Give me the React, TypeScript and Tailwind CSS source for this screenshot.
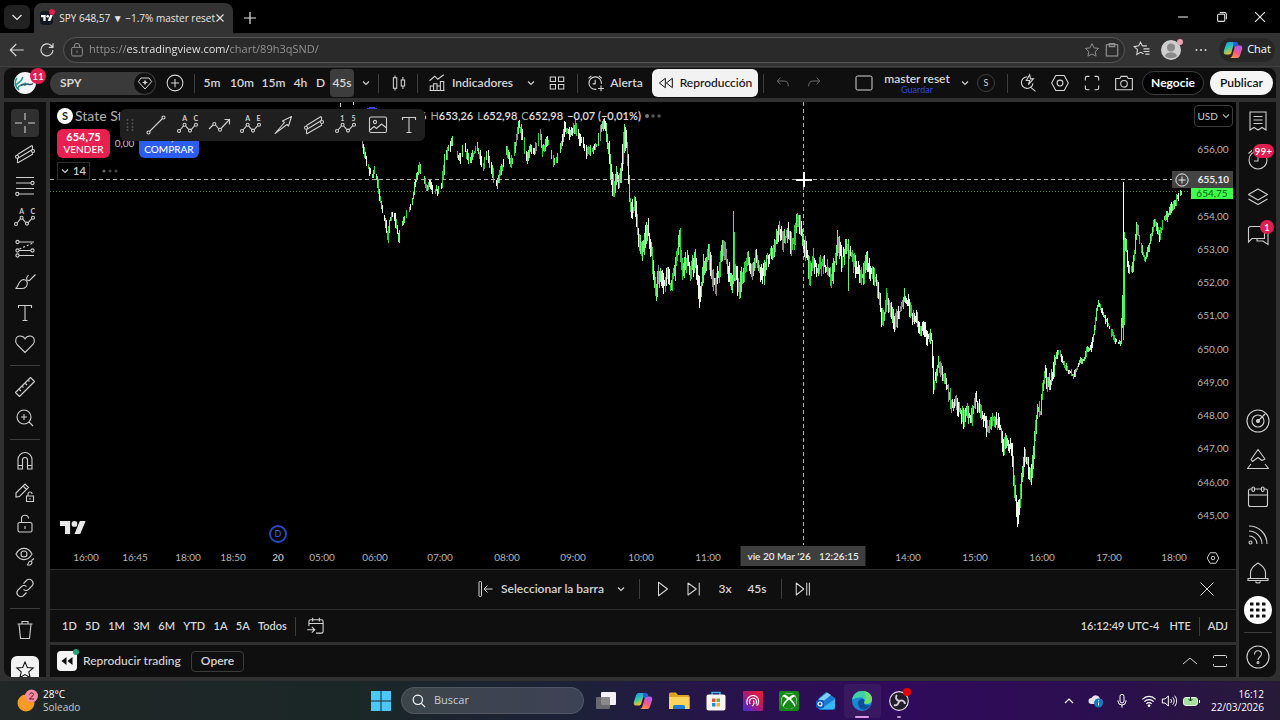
import type { ReactNode } from 'react';

interface GlyphProps {
  children: ReactNode;
  className?: string;
}

// 24px grid line icon, one-pixel strokes
const Glyph = ({ children, className = 'h-6 w-6' }: GlyphProps) => (
  <svg
    viewBox="0 0 24 24"
    fill="none"
    stroke="currentColor"
    strokeWidth="1.1"
    className={`shrink-0 ${className}`}
    aria-hidden="true"
  >
    {children}
  </svg>
);

const Chevron = () => (
  <svg viewBox="0 0 8 8" className="h-2 w-2 shrink-0" fill="none" stroke="currentColor" strokeWidth="1.1" aria-hidden="true">
    <path d="M1 2.5l3 3 3-3" />
  </svg>
);

const Sep = ({ className = '' }: { className?: string }) => (
  <div className={`w-px shrink-0 bg-[#3c3c3c] ${className}`} />
);

const patternGlyph = (first: string, last: string) => (
  <Glyph>
    <path d="M4 17l3.5-4.2M9.6 12.8l3.2 3.8M15.2 16.6l3.6-4" />
    <circle cx="3" cy="18" r="1.5" />
    <circle cx="8.6" cy="11.8" r="1.5" />
    <circle cx="14" cy="17.6" r="1.5" />
    <circle cx="20" cy="11.8" r="1.5" />
    <text x="6.2" y="7.6" fontSize="7" fontWeight="700" fill="currentColor" stroke="none">{first}</text>
    <text x="17.6" y="7.6" fontSize="7" fontWeight="700" fill="currentColor" stroke="none">{last}</text>
  </Glyph>
);

const channelGlyph = (
  <Glyph>
    <path d="M4.5 12.5L19 3.5M4.5 16.5L19.5 7.5M4.5 21L20 12M4.5 12.5v8.5M19.5 3.5v8" />
    <circle cx="4" cy="14.8" r="1.5" fill="#0f0f0f" />
    <circle cx="20" cy="9" r="1.5" fill="#0f0f0f" />
  </Glyph>
);

const textGlyph = (
  <Glyph>
    <path d="M5.5 7V4.5h13V7M12 4.5v15M9.5 19.5h5" />
  </Glyph>
);

const drawingTools = [
  {
    label: 'Cruz',
    icon: <Glyph><path d="M12 2v7M12 15v7M2 12h7M15 12h7" /></Glyph>,
  },
  { label: 'Líneas de tendencia', icon: channelGlyph },
  {
    label: 'Fibonacci',
    icon: (
      <Glyph>
        <path d="M3 3.5h18M3 9h15M3 14.5h18M6 20h15" />
        <circle cx="19.5" cy="9" r="1.6" />
        <circle cx="4.3" cy="20" r="1.6" />
      </Glyph>
    ),
  },
  { label: 'Patrones', icon: patternGlyph('A', 'C') },
  {
    label: 'Proyección',
    icon: (
      <Glyph>
        <path d="M6 5h15M6 13.5h12M6 18.5h15" />
        <path d="M6.5 12L20 6" strokeDasharray="2 2" />
        <circle cx="4.5" cy="5" r="1.6" />
        <circle cx="4.5" cy="13.5" r="1.6" />
        <circle cx="4.5" cy="18.5" r="1.6" />
        <circle cx="19.5" cy="13.5" r="1.6" />
      </Glyph>
    ),
  },
  {
    label: 'Pincel',
    icon: (
      <Glyph>
        <path d="M2.5 19.5c3-1 2.5-8 8-9 2.5 0 4 2 3.8 4.5-.5 3-3 4.5-5.5 4.5zM14 8c-1 2 0 4 2.5 3.5L22.5 5.5M14 8l1.5-2" />
      </Glyph>
    ),
  },
  { label: 'Texto', icon: textGlyph },
  {
    label: 'Iconos',
    icon: <Glyph><path d="M12 20.5l-8-8C1.5 9.5 2.5 4 7 4c2.5 0 4 1 5 2.8C13 5 14.5 4 17 4c4.5 0 5.5 5.5 3 8.5z" /></Glyph>,
  },
];

const measureTools = [
  {
    label: 'Medir',
    icon: <Glyph><path d="M2.5 17.5l15-15 4 4-15 15zM6 14l2 2M9 11l1.5 1.5M12 8l2 2M15 5l1.5 1.5" strokeLinejoin="round" /></Glyph>,
  },
  {
    label: 'Ampliar',
    icon: <Glyph><circle cx="11" cy="11" r="7" /><path d="M16 16l4 4M8 11h6M11 8v6" /></Glyph>,
  },
];

const lockTools = [
  {
    label: 'Imán',
    icon: <Glyph><path d="M5 20V10.5a7 7 0 0 1 14 0V20h-4.5v-9a2.5 2.5 0 0 0-5 0v9zM5 16.5h4.5M14.5 16.5H19" /></Glyph>,
  },
  {
    label: 'Mantener dibujo',
    icon: <Glyph><path d="M3 12L12 3l3.5 3.5-9 9L3 16zM10 5l3.5 3.5M13.5 15h7v5.5h-7zM15 15v-2a2 2 0 0 1 4 0M17 17v1.5" /></Glyph>,
  },
  {
    label: 'Bloquear dibujos',
    icon: <Glyph><rect x="5" y="10.5" width="14" height="9.5" rx="1.5" /><path d="M8.5 10.5V7a3.5 3.5 0 0 1 7-.5M12 14v3" /></Glyph>,
  },
  {
    label: 'Ocultar dibujos',
    icon: <Glyph><path d="M3 10c4-7.5 12-7.5 16 0-4 7.5-12 7.5-16 0zM14 21c1.5-.5 1-3.5 3.5-4 2 0 2 3.5-.5 4zM18.5 16.5l2.5-2" /><circle cx="11" cy="10" r="3" /></Glyph>,
  },
  {
    label: 'Enlace',
    icon: <Glyph><path d="M10.5 7.5L14 4a4 4 0 0 1 5.5 5.5l-4 4a4 4 0 0 1-5 0M13.5 16.5L10 20a4 4 0 0 1-5.5-5.5l4-4a4 4 0 0 1 5 0" /></Glyph>,
  },
];

const trashTools = [
  {
    label: 'Eliminar',
    icon: <Glyph><path d="M4.5 6h15M6 6l1.5 14.5h9L18 6M9 6V3.5h6V6" /></Glyph>,
  },
];

const toolGroups = [drawingTools, measureTools, lockTools, trashTools];

const favoriteTools = [
  {
    label: 'Línea',
    icon: <Glyph><path d="M5.5 18.5l13-13" /><circle cx="4.5" cy="19.5" r="1.5" /><circle cx="19.5" cy="4.5" r="1.5" /></Glyph>,
  },
  { label: 'ABC', icon: patternGlyph('A', 'C') },
  {
    label: 'Ruta',
    icon: (
      <Glyph>
        <path d="M2 16l4-4M8.5 12l3.5 4M14 15.5L22 7M17.5 6.5h5v5" />
        <circle cx="7.3" cy="11" r="1.5" />
        <circle cx="13" cy="16.8" r="1.5" />
      </Glyph>
    ),
  },
  { label: 'ABCDE', icon: patternGlyph('A', 'E') },
  {
    label: 'Flecha',
    icon: <Glyph><path d="M4 20.5l9.5-11-2-1.5L20.5 3.5 17.5 13l-1.5-1.5z" strokeLinejoin="round" /></Glyph>,
  },
  { label: 'Canal', icon: channelGlyph },
  { label: 'Impulso', icon: patternGlyph('1', '5') },
  {
    label: 'Imagen',
    icon: <Glyph><rect x="3.5" y="4" width="17" height="15.5" rx="1.5" /><circle cx="9" cy="9" r="1.6" /><path d="M4 17l4-3.5 2.5 2 5-4.5 5 4" /></Glyph>,
  },
  { label: 'Texto', icon: textGlyph },
];

const intervals = [
  { label: '5m', className: 'w-[30px]' },
  { label: '10m', className: 'w-[30px]' },
  { label: '15m', className: 'w-[33px]' },
  { label: '4h', className: 'w-[21px]' },
  { label: 'D', className: 'w-[19px]' },
  { label: '45s', className: 'w-6 h-7 rounded bg-[#3d3d3d]' },
];

const sideTop = [
  {
    label: 'Lista',
    badge: '',
    icon: <Glyph><path d="M4 3h16v18l-4-2.5-4 2.5-4-2.5L4 21zM7.5 7.5h9M7.5 11h9M7.5 14.5h9" /></Glyph>,
  },
  {
    label: 'Alertas',
    badge: '99+',
    icon: <Glyph><circle cx="12" cy="13" r="9" /><path d="M12 8v6H8M2.5 6.500L6 3.500" /></Glyph>,
  },
  {
    label: 'Capas',
    badge: '',
    icon: <Glyph><path d="M12 4l9.5 5.5L12 15 2.5 9.5zM2.5 14l9.5 5.5 9.5-5.5" strokeLinejoin="round" /></Glyph>,
  },
  {
    label: 'Chat',
    badge: '1',
    icon: <Glyph><path d="M2.5 19V5.5a2 2 0 0 1 2-2h14v12H6zM11 16v2h6l5 3.5V8h-3.5" /></Glyph>,
  },
];

const sideBottom = [
  {
    label: 'Analizador',
    icon: <Glyph><circle cx="12" cy="12" r="11" /><circle cx="12" cy="12" r="6" /><circle cx="12" cy="12" r="1.5" fill="currentColor" /><path d="M12 12l7.5-7.5" /></Glyph>,
  },
  {
    label: 'Pine',
    icon: <Glyph><path d="M12 2.5l7 9.5-3 1.500-4-3-5.500 4L5 12.500zM5 17l-3.500 4.500h21L19 17" strokeLinejoin="round" /></Glyph>,
  },
  {
    label: 'Calendario',
    icon: <Glyph><rect x="2.5" y="4" width="19" height="17.5" rx="2" /><path d="M2.5 10h19" /><rect x="6" y="2" width="2.5" height="4.5" rx="1.2" fill="#0f0f0f" /><rect x="15.5" y="2" width="2.5" height="4.5" rx="1.2" fill="#0f0f0f" /></Glyph>,
  },
  {
    label: 'Ideas',
    icon: <Glyph><path d="M3 3c10 0 18 8 18 18M3 8c7 0 13 6 13 13M3 13c4.5 0 8 3.5 8 8" /><circle cx="4.5" cy="19.5" r="1.5" /></Glyph>,
  },
  {
    label: 'Notificaciones',
    icon: <Glyph><path d="M4.5 17.5v-6C4.5 7 8 4.5 12 2c4 2.500 7.500 5 7.500 9.500v6M2 17.500h20v2H2zM9.500 20.500c.5 2 4.500 2 5 0" /></Glyph>,
  },
];

const priceLabels = [656, 655, 654, 653, 652, 651, 650, 649, 648, 647, 646, 645];

// x is measured on the 1186 wide chart canvas
const timeLabels = [
  { text: '16:00', x: 36 },
  { text: '16:45', x: 85 },
  { text: '18:00', x: 138 },
  { text: '18:50', x: 183 },
  { text: '20', x: 228 },
  { text: '05:00', x: 272 },
  { text: '06:00', x: 325 },
  { text: '07:00', x: 390 },
  { text: '08:00', x: 457 },
  { text: '09:00', x: 523 },
  { text: '10:00', x: 591 },
  { text: '11:00', x: 658 },
  { text: '14:00', x: 858 },
  { text: '15:00', x: 925 },
  { text: '16:00', x: 992 },
  { text: '17:00', x: 1059 },
  { text: '18:00', x: 1124 },
];

const ranges = ['1D', '5D', '1M', '3M', '6M', 'YTD', '1A', '5A', 'Todos'];

// swing points of the session: x, y
const swings = [
  361, 139, 366, 158, 368, 166, 372, 176, 375, 170, 378, 184, 380, 200, 383, 210, 386, 224, 388, 238, 390, 220, 394, 213, 399, 238,
  401, 228, 405, 220, 409, 210, 413, 198, 416, 180, 420, 166, 424, 178, 427, 188, 430, 183, 433, 192, 437, 190, 440, 193,
  442, 184, 445, 160, 448, 150, 452, 142, 455, 148, 459, 160, 462, 153, 465, 146, 468, 160, 472, 157, 477, 148, 480, 155,
  483, 168, 487, 153, 490, 165, 494, 177, 497, 185, 500, 175, 504, 162, 507, 148, 510, 163, 513, 160, 516, 142, 519, 124,
  523, 138, 527, 158, 530, 150, 535, 152, 540, 134, 543, 150, 548, 140, 551, 155, 555, 165, 560, 150, 565, 128, 570, 133,
  575, 126, 580, 140, 585, 147, 587, 154, 592, 150, 597, 144, 602, 128, 604, 122, 606, 130, 609, 150, 612, 182, 614, 188,
  617, 176, 619, 188, 622, 165, 625, 132, 628, 155, 630, 200, 633, 212, 635, 202, 638, 228, 642, 256, 645, 240, 648, 230,
  652, 255, 656, 290, 660, 272, 665, 286, 668, 275, 671, 288, 676, 265, 680, 240, 683, 272, 687, 258, 691, 270, 696, 258,
  700, 298, 704, 266, 709, 252, 713, 278, 717, 284, 720, 265, 724, 247, 728, 268, 732, 284, 736, 272, 739, 290, 744, 270,
  748, 259, 752, 273, 756, 260, 760, 270, 764, 273, 767, 258, 772, 252, 776, 241, 779, 229, 783, 243, 788, 232, 792, 248,
  797, 224, 800, 222, 803, 242, 807, 252, 810, 276, 814, 260, 818, 271, 823, 262, 828, 272, 832, 278, 835, 262, 838, 242,
  842, 260, 846, 247, 851, 252, 855, 265, 860, 275, 864, 274, 867, 262, 872, 274, 877, 284, 880, 298, 882, 320, 885, 312,
  887, 298, 891, 310, 895, 324, 900, 312, 904, 298, 908, 302, 912, 314, 917, 320, 920, 334, 924, 328, 928, 338, 932, 340,
  934, 386, 937, 370, 939, 362, 943, 375, 948, 388, 952, 406, 955, 402, 960, 410, 964, 420, 967, 412, 971, 420, 976, 399,
  980, 408, 985, 420, 988, 430, 992, 420, 997, 420, 1001, 430, 1003, 448, 1007, 440, 1012, 450, 1015, 490, 1018, 518,
  1021, 490, 1025, 456, 1028, 465, 1031, 480, 1034, 450, 1038, 408, 1041, 414, 1043, 385, 1046, 374, 1048, 386, 1052, 378,
  1056, 358, 1059, 350, 1063, 362, 1068, 370, 1074, 376, 1080, 362, 1085, 358, 1087, 349, 1091, 349, 1094, 335, 1097, 310,
  1099, 303, 1102, 312, 1107, 322, 1113, 335, 1117, 342, 1121, 344, 1123, 300, 1125, 240, 1127, 250, 1129, 272, 1133, 267,
  1135, 250, 1137, 226, 1140, 240, 1145, 260, 1149, 248, 1152, 235, 1155, 222, 1160, 236, 1164, 220, 1168, 216, 1172, 206,
  1176, 200, 1182, 193,
];

const spikes = [
  { x: 733, top: 211, bottom: 282, color: '#4bf25a' },
  { x: 734, top: 232, bottom: 278, color: '#3bd948' },
  { x: 848, top: 252, bottom: 291, color: '#6fe77b' },
  { x: 1123, top: 228, bottom: 340, color: '#3bff49' },
  { x: 1124, top: 232, bottom: 325, color: '#3bff49' },
  { x: 1123, top: 182, bottom: 240, color: '#ffffff' },
];

const spreadAt = (x: number) => {
  if (x < 442) return 5;
  if (x < 608) return 7;
  if (x < 870) return 12;
  if (x < 1055) return 10;
  if (x < 1122) return 4;
  return 6;
};

const buildBars = () => {
  const bars: { x: number; top: number; bottom: number; color: string }[] = [];
  let seed = 20;
  const next = () => {
    seed = (seed * 16807) % 2147483647;
    return seed / 2147483647;
  };
  for (let i = 0; i < swings.length - 2; i += 2) {
    const [x0, y0, x1, y1] = swings.slice(i, i + 4);
    for (let x = x0; x < x1; x += 1) {
      const from = y0 + ((y1 - y0) * (x - x0)) / (x1 - x0);
      const to = y0 + ((y1 - y0) * (x + 1 - x0)) / (x1 - x0);
      const spread = spreadAt(x);
      const top = Math.min(from, to) - next() * spread;
      const bottom = Math.max(from, to) + next() * spread;
      const tone = next();
      const down = y1 > y0;
      const green = tone < (down ? 0.4 : 0.75);
      const skip = spread < 8 && next() < (x < 608 ? 0.22 : 0.08);
      const color = green ? (tone < 0.25 ? '#2fd03c' : '#6df57a') : tone > 0.88 ? '#8a8a8a' : '#eafbea';
      if (!skip) bars.push({ x, top: Math.round(top), bottom: Math.round(bottom), color });
    }
  }
  return [...bars, ...spikes];
};

const bars = buildBars();

const TvLogo = ({ className }: { className: string }) => (
  <svg viewBox="0 4 36 18" className={className} fill="currentColor" aria-hidden="true">
    <path d="M14 22H7V11H0V4h14v18zM28 22h-8l7.5-18h8L28 22z" />
    <circle cx="20" cy="8" r="4" />
  </svg>
);

const Copilot = ({ id, className }: { id: string; className: string }) => (
  <svg viewBox="0 0 20 20" className={className} aria-hidden="true">
    <defs>
      <linearGradient id={`${id}-a`} x1="0" y1="0" x2="0.4" y2="1">
        <stop offset="0" stopColor="#1f8df0" />
        <stop offset="0.5" stopColor="#2bc6b4" />
        <stop offset="1" stopColor="#f5c518" />
      </linearGradient>
      <linearGradient id={`${id}-b`} x1="0.6" y1="0" x2="0.2" y2="1">
        <stop offset="0" stopColor="#b45cf0" />
        <stop offset="0.5" stopColor="#f0568f" />
        <stop offset="1" stopColor="#ff9a3d" />
      </linearGradient>
    </defs>
    <path d="M5.5 2H13c-1.800.5-2.300 2-2.800 4L8.500 12c-.6 2-1.500 2.500-3 2.500H3C.8 14.500.4 12.500 1 10.500l2-6C3.500 3 4.200 2 5.500 2z" fill={`url(#${id}-a)`} />
    <path d="M14.500 18H7c1.800-.5 2.300-2 2.800-4l1.700-6c.6-2 1.500-2.500 3-2.500H17c2.200 0 2.600 2 2 4l-2 6c-.5 1.500-1.200 2.500-2.500 2.500z" fill={`url(#${id}-b)`} />
    <path d="M10 2h3c1.500 0 2 1.500 2.500 3.500h-1c-2 0-2.600.8-3 2.300l-1-3z" fill="#2560d8" />
  </svg>
);

const BrowserChrome = () => (
  <header className="font-['Open_Sans',sans-serif]">
    <div className="flex h-[33px] items-end bg-black pl-1 text-[#e6e6e6]">
      <button aria-label="Pestañas" className="mb-1 flex h-6 w-[26px] items-center justify-center rounded-md bg-[#212121]">
        <svg viewBox="0 0 12 12" className="h-3 w-3" fill="none" stroke="currentColor" strokeWidth="1.2"><path d="M1.5 4L6 8.500 10.500 4" /></svg>
      </button>
      <div className="ml-1 flex h-[30px] w-[199px] items-center rounded-t-lg bg-[#333] pl-1.5 pr-2">
        <span className="relative flex h-3.5 w-3.5 items-center justify-center rounded-sm bg-[#131722] text-white">
          <TvLogo className="h-1.5 w-3" />
          <span className="absolute -right-0.5 -top-0.5 h-1.5 w-1.5 rounded-full bg-[#e01e4f]" />
        </span>
        <span className="ml-1.5 flex-1 whitespace-nowrap text-[10px] font-medium">SPY 648,57 ▼ −1.7% master reset</span>
        <button aria-label="Cerrar pestaña">
          <svg viewBox="0 0 10 10" className="h-2.5 w-2.5" fill="none" stroke="currentColor" strokeWidth="1.1"><path d="M1.5 1.5l7 7M8.5 1.5l-7 7" /></svg>
        </button>
      </div>
      <button aria-label="Nueva pestaña" className="mb-2 ml-2.5">
        <svg viewBox="0 0 14 14" className="h-3.5 w-3.5" fill="none" stroke="currentColor" strokeWidth="1.2"><path d="M7 1v12M1 7h12" /></svg>
      </button>
      <div className="mb-2.5 ml-auto flex w-[103px] items-center justify-between pr-3.5">
        <button aria-label="Minimizar"><svg viewBox="0 0 11 11" className="h-3 w-3" stroke="currentColor"><path d="M1 5.5h9" /></svg></button>
        <button aria-label="Restaurar"><svg viewBox="0 0 11 11" className="h-3 w-3" fill="none" stroke="currentColor"><rect x="1.5" y="3" width="6.5" height="6.5" rx="1" /><path d="M3.5 1.5H8A1.5 1.5 0 0 1 9.5 3v4.5" /></svg></button>
        <button aria-label="Cerrar"><svg viewBox="0 0 11 11" className="h-3 w-3" stroke="currentColor"><path d="M1 1l9 9M10 1l-9 9" /></svg></button>
      </div>
    </div>

    <div className="flex h-[33px] items-center bg-[#333] pl-2 text-[#d8d8d8]">
      <button aria-label="Atrás"><Glyph className="h-[18px] w-[18px]"><path d="M21 12H3M11 4l-8 8 8 8" strokeWidth="1.5" /></Glyph></button>
      <button aria-label="Recargar" className="ml-3"><Glyph className="h-[18px] w-[18px]"><path d="M20 12a8 8 0 1 1-2.5-6L20 8M20 3v5.5h-5.5" strokeWidth="1.5" /></Glyph></button>
      <div className="ml-[7px] flex h-[26px] flex-1 items-center rounded-full border border-[#555] bg-[#2a2a2a] pr-1 pl-[5px] text-[#8f8f8f]">
        <Glyph className="h-4 w-4"><rect x="4" y="8" width="16" height="13" rx="2" strokeWidth="1.5" /><path d="M8 8V6a4 4 0 0 1 8 0v2M12 13v3" strokeWidth="1.5" /></Glyph>
        <input
          aria-label="Dirección"
          defaultValue="https://es.tradingview.com/chart/89h3qSND/"
          className="ml-1 min-w-0 flex-1 bg-[linear-gradient(to_right,#969696_38px,#f0f0f0_38px,#f0f0f0_140px,#969696_140px)] bg-clip-text text-[11px] text-transparent outline-none"
        />
        <button aria-label="Favorito"><Glyph className="h-4 w-4"><path d="M12 2.500l3 6.300 6.800.9-5 4.700 1.300 6.900-6.100-3.400-6.100 3.400 1.300-6.900-5-4.700 6.800-.9z" strokeWidth="1.5" /></Glyph></button>
        <button aria-label="Portapapeles" className="ml-1"><Glyph className="h-4 w-4"><rect x="3.5" y="4" width="17" height="17" strokeWidth="1.800" /><path d="M8 2.500h8V7H8z" strokeWidth="1.800" /></Glyph></button>
      </div>
      <button aria-label="Favoritos" className="ml-2"><Glyph className="h-[18px] w-[18px]"><path d="M14 17l-4-2-5 3 1-6.500L1.500 7.500 7.500 6.500 10 1.500l2.500 5h6M14 10.500h8M14 14h8M16.500 17.500H22" strokeWidth="1.400" /></Glyph></button>
      <button aria-label="Perfil" className="relative ml-2.5">
        <svg viewBox="0 0 20 20" className="h-5 w-5"><circle cx="10" cy="10" r="10" fill="#cfcfcf" /><circle cx="10" cy="7.500" r="4" fill="#8a8a8a" /><path d="M4 16c1-5 11-5 12 0-3 3-9 3-12 0z" fill="#8a8a8a" /></svg>
        <span className="absolute -right-0.5 -top-px h-1.5 w-1.5 rounded-full bg-[#f0a3b4]" />
      </button>
      <button aria-label="Más" className="ml-3.5"><svg viewBox="0 0 12 4" className="h-1 w-3" fill="currentColor"><circle cx="1.5" cy="2" r="1" /><circle cx="6" cy="2" r="1" /><circle cx="10.5" cy="2" r="1" /></svg></button>
      <button className="ml-3 mr-[5px] flex h-6 w-[56px] items-center justify-center gap-1 rounded-xl bg-[#272727] text-[11px] text-white">
        <Copilot id="edge" className="h-5 w-5" />
        Chat
      </button>
    </div>
  </header>
);

const TopToolbar = () => (
  <div className="flex h-[30px] items-center rounded-t-lg bg-[#0f0f0f] text-[#d6d6d6]">
    <div className="relative flex w-[42px] justify-center">
      <svg viewBox="0 0 22 22" className="h-[22px] w-[22px]">
        <circle cx="11" cy="11" r="11" fill="#f2f5f5" />
        <path d="M3 6c-3 4-2 9 2 12M2 13c2-3 5-2 7-8M4 16c1-4 4-2 8-5" fill="none" stroke="#2a9a90" strokeWidth="1.600" />
        <path d="M7 13.500c2-3 3 1 5-1s3 2 7-1" fill="none" stroke="#30506a" strokeWidth="1.500" />
      </svg>
      <span className="absolute -top-1 right-0 flex h-4 w-4 items-center justify-center rounded-full bg-[#e01e4f] text-[10px] font-semibold text-white">11</span>
    </div>
    <button className="ml-1 flex h-[23px] w-[106px] items-center justify-between rounded-full bg-[#3a3a3a] pl-2.5 pr-px text-xs font-bold">
      SPY
      <span className="flex h-[21px] w-[21px] items-center justify-center rounded-full bg-[#0f0f0f]">
        <Glyph className="h-4 w-4"><path d="M6 4.500h12l4 5.500-10 11L2 10z" strokeWidth="1.500" /><path d="M12 7l1.500 3 3 1-3 1.200L12 15.500l-1.500-3.300-3-1.200 3-1z" fill="currentColor" stroke="none" /></Glyph>
      </span>
    </button>
    <button aria-label="Comparar" className="flex w-[38px] justify-center"><Glyph className="h-[18px] w-[18px]"><circle cx="12" cy="12" r="10.5" strokeWidth="1.400" /><path d="M12 6.500v11M6.500 12h11" strokeWidth="1.400" /></Glyph></button>
    <Sep className="mr-0.5 h-[19px]" />
    {intervals.map((item) => (
      <button key={item.label} className={`flex shrink-0 items-center justify-center text-xs font-semibold ${item.className}`}>
        {item.label}
      </button>
    ))}
    <button aria-label="Intervalos" className="flex w-[23px] justify-center"><Chevron /></button>
    <Sep className="mx-px h-[19px]" />
    <button aria-label="Velas" className="flex w-[37px] justify-center">
      <Glyph className="h-[18px] w-[18px]"><path d="M4.500 5h4.500v14H4.500zM6.700 2v3M6.700 19v3M15 8h4.500v8H15zM17.200 4v4M17.200 16v4" strokeWidth="1.400" /></Glyph>
    </button>
    <Sep className="mr-2.5 h-[19px]" />
    <button className="flex items-center gap-1.5 text-xs font-semibold">
      <Glyph className="h-[18px] w-[18px]"><path d="M2 9l7-6 4 4 8-6M3 22v-6h4.500v6M7.500 22v-9H12v9M12 22v-6h4.500v6M16.500 22V10H21v12zM2 22h20" strokeWidth="1.400" /></Glyph>
      <span className="w-[61px]">Indicadores</span>
    </button>
    <button aria-label="Favoritos" className="ml-2 flex w-5 justify-center"><Chevron /></button>
    <button aria-label="Plantillas" className="ml-1.5 flex w-5 justify-center">
      <Glyph className="h-[18px] w-[18px]"><path d="M3 4h7v6H3zM14 4h7v6h-7zM3 14h7v6H3zM14 14h7v6h-7z" strokeWidth="1.400" /></Glyph>
    </button>
    <Sep className="mr-2 ml-2.5 h-[19px]" />
    <button className="flex items-center gap-1 text-xs font-semibold">
      <Glyph className="h-5 w-5"><path d="M18.500 13a7.500 7.500 0 1 0-6 6.500M11 8v5H8M3 6.500l3.500-3M19 6.500l-3.500-3M18 15v7M14.500 18.500h7" strokeWidth="1.300" /></Glyph>
      <span className="w-[33px]">Alerta</span>
    </button>
    <button className="ml-[9px] flex h-7 w-[106px] items-center justify-center gap-1.5 rounded-md bg-[#f2f2f2] text-xs font-medium text-[#0f0f0f]">
      <Glyph className="h-4 w-4"><path d="M11 5v14L2 12zM21.500 5v14l-9-7z" strokeWidth="1.500" strokeLinejoin="round" /></Glyph>
      Reproducción
    </button>
    <Sep className="ml-[5px] h-[19px]" />
    <div className="ml-[11px] flex gap-[15px] text-[#6a6a6a]">
      <button aria-label="Deshacer"><Glyph className="h-4 w-4"><path d="M8 4L3.500 9 8 14M3.500 9H14c4 0 6 3 6 8" strokeWidth="1.500" /></Glyph></button>
      <button aria-label="Rehacer"><Glyph className="h-4 w-4"><path d="M16 4l4.500 5-4.500 5M20.500 9H10c-4 0-6 3-6 8" strokeWidth="1.500" /></Glyph></button>
    </div>

    <div className="ml-auto flex items-center pr-[3px]">
      <button aria-label="Diseño"><svg viewBox="0 0 18 16" className="h-4 w-[18px]" fill="none" stroke="currentColor"><rect x="1" y="1" width="16" height="14" rx="1.5" /></svg></button>
      <button className="ml-2.5 flex w-[68px] flex-col items-center text-xs leading-3 font-semibold whitespace-nowrap">
        master reset
        <span className="text-[9px] leading-[9px] font-normal text-[#3347dd]">Guardar</span>
      </button>
      <button aria-label="Diseños" className="ml-1 flex w-5 justify-center"><Chevron /></button>
      <span className="ml-0.5 flex h-[18px] w-[18px] items-center justify-center rounded-full border border-[#3c3c3c] text-[9px]">S</span>
      <Sep className="ml-3 h-[19px]" />
      <div className="ml-2.5 flex gap-3">
        <button aria-label="Buscar"><Glyph className="h-5 w-5"><path d="M11 4.500a7 7 0 1 0 7 8M15 17l6 5M14 2l-4 7h4l-1.500 5L18.500 7H15z" strokeWidth="1.300" /></Glyph></button>
        <button aria-label="Ajustes"><Glyph className="h-5 w-5"><path d="M7 3h10l5 9-5 9H7l-5-9z" strokeWidth="1.300" strokeLinejoin="round" /><circle cx="12" cy="12" r="3.500" strokeWidth="1.300" /></Glyph></button>
        <button aria-label="Pantalla completa"><Glyph className="h-5 w-5"><path d="M4 9V6a2 2 0 0 1 2-2h3M15 4h3a2 2 0 0 1 2 2v3M20 15v3a2 2 0 0 1-2 2h-3M9 20H6a2 2 0 0 1-2-2v-3" strokeWidth="1.300" /></Glyph></button>
        <button aria-label="Captura"><Glyph className="h-5 w-5"><path d="M2 6.500h5L8.500 4h7L17 6.500h5V20H2z" strokeWidth="1.300" strokeLinejoin="round" /><circle cx="12" cy="13" r="4" strokeWidth="1.300" /></Glyph></button>
      </div>
      <button className="ml-2 h-6 w-[62px] rounded-full border border-[#3c3c3c] bg-black text-xs font-bold text-white">Negocie</button>
      <button className="ml-1.5 h-6 w-[63px] rounded-full bg-[#f5f5f5] text-xs font-semibold text-[#0f0f0f]">Publicar</button>
    </div>
  </div>
);

const LeftToolbar = () => (
  <nav className="flex w-[42px] shrink-0 flex-col items-center rounded-bl-lg bg-[#0f0f0f] pt-[5px] text-[#cfcfcf]">
    {toolGroups.map((group, index) => (
      <div key={index} className="contents">
        {index > 0 && <div className="my-[5px] h-px w-[30px] bg-[#3c3c3c]" />}
        {group.map((tool, toolIndex) => (
          <div key={tool.label} className="flex min-h-6 flex-1 items-center">
            <button
              aria-label={tool.label}
              className={`flex h-7 w-7 items-center justify-center rounded ${index + toolIndex === 0 ? 'bg-[#303030]' : ''}`}
            >
              {tool.icon}
            </button>
          </div>
        ))}
      </div>
    ))}
    <button aria-label="Destacados" className="mt-2.5 flex h-[21px] w-7 justify-center overflow-hidden rounded-t-md bg-[#f2f2f2] pt-1 text-[#0f0f0f]">
      <Glyph className="h-5 w-5"><path d="M12 2.500l2.800 6.500 7 .6-5.300 4.600 1.600 6.900L12 17.500l-6.100 3.600 1.600-6.900-5.300-4.600 7-.6z" strokeWidth="1.300" /></Glyph>
    </button>
  </nav>
);

const RightToolbar = () => (
  <nav className="flex w-[37px] shrink-0 flex-col items-center rounded-br-lg bg-[#0f0f0f] text-[#cfcfcf]">
    {sideTop.map((item) => (
      <button key={item.label} aria-label={item.label} className="relative flex h-[38px] w-full items-center justify-center">
        {item.icon}
        {item.badge && (
          <span className="absolute top-1 right-0.5 flex h-3.5 min-w-3.5 items-center justify-center rounded-full bg-[#e01e4f] px-0.5 text-[10px] font-semibold text-white">
            {item.badge}
          </span>
        )}
      </button>
    ))}
    <div className="flex-1" />
    {sideBottom.map((item) => (
      <button key={item.label} aria-label={item.label} className="flex h-[38px] w-full items-center justify-center">
        {item.icon}
      </button>
    ))}
    <button aria-label="Productos" className="my-1 flex h-7 w-7 items-center justify-center rounded-full bg-white text-[#0f0f0f]">
      <svg viewBox="0 0 16 16" className="h-4 w-4" fill="currentColor">
        {[0, 6, 12].map((y) => [0, 6, 12].map((x) => <rect key={`${x}-${y}`} x={x} y={y + 0.5} width="3.5" height="3" rx="0.5" />))}
      </svg>
    </button>
    <div className="my-1 h-px w-7 bg-[#3c3c3c]" />
    <button aria-label="Ayuda" className="flex h-10 w-full items-center justify-center">
      <Glyph><circle cx="12" cy="12" r="11" /><path d="M8.500 9.500c0-5 7-5 7-.5 0 3-3.500 3-3.500 6" /><circle cx="12" cy="17.500" r="1" /></Glyph>
    </button>
  </nav>
);

const Quote = ({ name, value }: { name: string; value: string }) => (
  <span>
    <span className="font-normal text-[#a8a8a8]">{name}</span>
    {value}
  </span>
);

const Chart = () => (
  <section className="relative flex min-h-[420px] flex-1 flex-col overflow-hidden bg-black text-[10px] text-[#b5b5b5]">
    <svg viewBox="50 102 1186 467" preserveAspectRatio="none" className="absolute inset-0 h-full w-full" shapeRendering="crispEdges" aria-label="SPY">
      <path d="M50 191.500H1190" stroke="#4f8a3a" strokeDasharray="1 2" />
      {bars.map((bar, index) => (
        <rect key={index} x={bar.x} y={bar.top} width="1" height={Math.max(1, bar.bottom - bar.top)} fill={bar.color} />
      ))}
      <path d="M340 103v4M353 102v3" stroke="#cfcfcf" />
      <path d="M50 179.500H1172M803.500 102V545" stroke="#b0b0b0" strokeDasharray="4 3" />
      <path d="M796 179.500h16M803.500 172v15" stroke="#fff" strokeWidth="2" />
      <circle cx="372" cy="117" r="9" fill="none" stroke="#3347dd" strokeWidth="2" />
    </svg>

    <div className="relative flex flex-1">
      <div className="flex flex-1 flex-col pt-1 pl-[7px]">
        <div className="flex h-5 items-center text-[11px] font-semibold whitespace-nowrap text-[#e0e0e0]">
          <span className="flex h-4 w-4 items-center justify-center rounded-full bg-white text-[11px] font-bold text-[#222]">S</span>
          <h1 className="ml-0.5 w-[345px] text-sm font-medium text-[#a9a9a9]">State St</h1>
          <p className="flex gap-1">
            <span>6</span>
            <Quote name="H" value="653,26" />
            <Quote name="L" value="652,98" />
            <Quote name="C" value="652,98" />
            <span>−0,07 (−0,01%)</span>
          </p>
          <svg viewBox="0 0 18 4" className="ml-1 h-1 w-[18px]" fill="#7a7a7a"><circle cx="2" cy="2" r="2" /><circle cx="8" cy="2" r="1.8" fill="#555" /><circle cx="14" cy="2" r="1.8" fill="#555" /></svg>
        </div>
        <div className="mt-[3px] flex h-7 items-center leading-3 text-white">
          <button className="h-[29px] w-[53px] rounded-md bg-[#e8204f] font-medium"><b className="block text-[11px]">654,75</b>VENDER</button>
          <span className="w-[29px] text-center text-[#c0c0c0]">0,00</span>
          <button className="h-[29px] w-[60px] rounded-md bg-[#2b5df0] font-medium"><b className="block text-[11px]">654,75</b>COMPRAR</button>
        </div>
        <div className="mt-[5px] flex items-center gap-3">
          <button className="flex h-[18px] w-[33px] items-center justify-center gap-1 border border-[#2c2c2c] text-[11px] font-semibold text-[#cfcfcf]">
            <Chevron />
            14
          </button>
          <svg viewBox="0 0 18 4" className="h-1 w-[18px]" fill="#444"><circle cx="2" cy="2" r="1.6" fill="#666" /><circle cx="8" cy="2" r="1.6" /><circle cx="14" cy="2" r="1.6" /></svg>
        </div>
        <TvLogo className="mt-auto mb-2.5 ml-[3px] h-[13px] w-[26px] text-[#e8e8e8]" />
      </div>

      <div className="flex w-[46px] flex-col items-center pt-[3px]">
        <label className="relative flex h-[22px] w-[39px] items-center rounded border border-[#3c3c3c]">
          <span className="sr-only">Moneda</span>
          <select className="h-full w-full appearance-none bg-transparent pl-[3px] text-[10px] leading-5 text-[#cfcfcf] outline-none">
            <option>USD</option>
          </select>
          <span className="pointer-events-none absolute right-0.5"><Chevron /></span>
        </label>
        <ol className="mt-3.5 mb-[21px] flex flex-1 flex-col justify-between">
          {priceLabels.map((price) => (
            <li key={price} className={`leading-4 ${price === 655 ? 'invisible' : ''}`}>{price},00</li>
          ))}
        </ol>
      </div>
    </div>

    <div className="relative h-[25px] leading-[27px]">
      {timeLabels.map((label) => (
        <span
          key={label.x}
          className={`absolute -translate-x-1/2 ${label.text === '20' ? 'font-bold' : ''}`}
          style={{ left: `${(label.x / 1186) * 100}%` }}
        >
          {label.text}
        </span>
      ))}
      <span className="absolute top-0.5 left-[63.5%] flex h-5 w-[125px] -translate-x-1/2 items-center justify-center gap-2 bg-[#3e3e3e] font-semibold whitespace-nowrap text-[#e8e8e8]">
        <span>vie 20 Mar '26</span>
        <span>12:26:15</span>
      </span>
      <button aria-label="Ajustes de escala" className="absolute right-4 flex h-[27px] items-center text-[#cfcfcf]">
        <Glyph className="h-3.5 w-3.5"><path d="M7 3h10l5 9-5 9H7l-5-9z" strokeWidth="1.700" /><circle cx="12" cy="12" r="3" strokeWidth="1.700" /></Glyph>
      </button>
    </div>

    {/* price tags pinned to the scale */}
    <span className="absolute top-[85px] right-[3px] flex h-3 w-[42px] items-center justify-center bg-[#3dff4c] text-[#0c5a12]">654,75</span>
    <span className="absolute top-[69px] right-[3px] flex h-[17px] w-[61px] items-center justify-between bg-[#434343] pr-1 pl-[3px] font-bold text-[#ececec]">
      <Glyph className="h-3.5 w-3.5"><circle cx="12" cy="12" r="10.5" strokeWidth="1.700" /><path d="M12 6v12M6 12h12" strokeWidth="1.700" /></Glyph>
      655,10
    </span>
    <span className="absolute bottom-[26px] left-[219px] flex h-[18px] w-[18px] items-center justify-center rounded-full border-2 border-[#2a48c0] text-[9px] font-semibold text-[#3a58d8]">D</span>

    <div className="absolute top-[7px] left-[70px] flex h-8 w-[305px] items-center rounded-md bg-[#1f1f1f] text-[#cfcfcf]">
      <svg viewBox="0 0 8 12" className="mx-1.5 h-3 w-2" fill="#555">
        {[1, 4.5, 8, 11].map((y) => [1.5, 6.5].map((x) => <circle key={`${x}-${y}`} cx={x} cy={y} r="0.9" />))}
      </svg>
      {favoriteTools.map((tool) => (
        <button key={tool.label} aria-label={tool.label} className="flex flex-1 justify-center">{tool.icon}</button>
      ))}
    </div>
  </section>
);

const ReplayBar = () => (
  <div className="grid h-10 grid-cols-[1fr_auto_1fr] items-center border-t border-[#2c2c2c] bg-[#0f0f0f] pb-0.5 text-xs font-semibold text-[#d6d6d6]">
    <div />
    <div className="flex items-center pl-1">
      <button className="flex items-center gap-[7px]">
        <svg viewBox="0 0 15 16" className="h-4 w-[15px]" fill="none" stroke="currentColor"><rect x="1" y="0.5" width="2.5" height="15" rx="1" /><path d="M14.500 8H6M9.500 4.500L6 8l3.500 3.500" /></svg>
        <span className="w-[105px]">Seleccionar la barra</span>
      </button>
      <button aria-label="Opciones de barra" className="ml-2 flex w-4 justify-center"><Chevron /></button>
      <Sep className="ml-2.5 h-5" />
      <button aria-label="Reproducir" className="ml-3.5"><Glyph className="h-[18px] w-[18px]"><path d="M6 3l12 9-12 9z" strokeWidth="1.400" strokeLinejoin="round" /></Glyph></button>
      <button aria-label="Avanzar" className="ml-[13px]"><Glyph className="h-[18px] w-[18px]"><path d="M4 4l11 8-11 8zM19 3.500v17" strokeWidth="1.400" strokeLinejoin="round" /></Glyph></button>
      <button className="ml-2 w-7">3x</button>
      <button className="ml-1 w-7">45s</button>
      <Sep className="ml-2.5 h-5" />
      <button aria-label="Ir al final" className="ml-3"><Glyph className="h-[18px] w-[18px]"><path d="M3 4l10 8-10 8zM17 3.500v17M20.500 3.500v17" strokeWidth="1.400" strokeLinejoin="round" /></Glyph></button>
    </div>
    <button aria-label="Cerrar reproducción" className="mr-[22px] justify-self-end">
      <svg viewBox="0 0 14 14" className="h-3.5 w-3.5" stroke="currentColor"><path d="M.5.5l13 13M13.5.5l-13 13" /></svg>
    </button>
  </div>
);

const RangeBar = () => (
  <div className="flex h-[33px] items-center border-t border-[#2c2c2c] bg-[#0f0f0f] pr-2 pl-3 text-[11px] font-semibold text-[#d6d6d6]">
    <div className="flex w-[225px] justify-between">
      {ranges.map((range) => (
        <button key={range}>{range}</button>
      ))}
    </div>
    <Sep className="ml-2 h-[19px]" />
    <button aria-label="Ir a fecha" className="ml-2.5">
      <Glyph className="h-5 w-5"><path d="M3.500 12V6.500a2 2 0 0 1 2-2h13a2 2 0 0 1 2 2v12a2 2 0 0 1-2 2H12M3.500 9h17M8 2v4.500M16 2v4.500M1.500 16.500h9M7 13l3.500 3.500L7 20" strokeWidth="1.300" /></Glyph>
    </button>
    <div className="ml-auto flex items-center">
      <button>16:12:49 UTC-4</button>
      <button className="ml-2.5">HTE</button>
      <Sep className="mx-2 h-[19px]" />
      <button>ADJ</button>
    </div>
  </div>
);

const TradingBar = () => (
  <div className="mt-[3px] flex h-8 items-center bg-[#0f0f0f] pr-2 pl-[7px] text-xs font-medium text-[#d6d6d6]">
    <span className="relative flex h-5 w-5 items-center justify-center rounded bg-[#f5f5f5]">
      <svg viewBox="0 0 12 10" className="h-2.5 w-3" fill="#0f0f0f"><path d="M5.500 1v8L.5 5zM11.500 1v8l-5-4z" /></svg>
      <span className="absolute -top-0.5 -right-0.5 h-1.5 w-1.5 rounded-full bg-[#27a37a]" />
    </span>
    <span className="ml-1.5 w-[102px] whitespace-nowrap">Reproducir trading</span>
    <button className="ml-1.5 h-[21px] w-[53px] rounded border border-[#3c3c3c] font-semibold">Opere</button>
    <button aria-label="Desplegar" className="ml-auto"><svg viewBox="0 0 16 8" className="h-2 w-4" fill="none" stroke="currentColor"><path d="M1 7l7-6 7 6" /></svg></button>
    <button aria-label="Maximizar" className="ml-3.5"><svg viewBox="0 0 16 16" className="h-4 w-4" fill="none" stroke="currentColor"><path d="M1.500 5V3.500a1 1 0 0 1 1-1h11a1 1 0 0 1 1 1V5M1.500 11v1.500a1 1 0 0 0 1 1h11a1 1 0 0 0 1-1V11" /></svg></button>
  </div>
);

const pinnedApps = [
  { label: 'Vista de tareas', icon: <svg viewBox="0 0 20 20" className="h-5 w-5"><rect x="5" y="1" width="15" height="13" rx="1" fill="#f4f0f8" /><rect x="0" y="6" width="14" height="12" rx="1" fill="#777" fillOpacity="0.85" /></svg> },
  { label: 'Copilot', icon: <Copilot id="bar" className="h-5 w-5" /> },
  { label: 'Explorador', icon: <svg viewBox="0 0 22 20" className="h-5 w-[22px]"><path d="M1 3a1.500 1.500 0 0 1 1.500-1.500H8L10 4h10a1.500 1.500 0 0 1 1.500 1.500V18H1z" fill="#e0a225" /><path d="M1 6h20.500v12H1z" fill="#fbd45c" /><path d="M5 18v-2.500A1.500 1.500 0 0 1 6.500 14h9a1.500 1.500 0 0 1 1.500 1.500V18z" fill="#1f7fd0" /></svg> },
  { label: 'Tienda', icon: <svg viewBox="0 0 20 20" className="h-5 w-5"><path d="M6 4V1.500h8V4" fill="none" stroke="#3fb4ea" strokeWidth="1.5" /><rect x="0.5" y="3.5" width="19" height="16" rx="2" fill="#f5f5f5" /><path d="M6 7.500h3.500V11H6z" fill="#e8502e" /><path d="M10.500 7.500H14V11h-3.500z" fill="#6fae3a" /><path d="M6 12h3.500v3.500H6z" fill="#2a8ad8" /><path d="M10.500 12H14v3.500h-3.500z" fill="#f2b52a" /></svg> },
  { label: 'Huella', icon: <svg viewBox="0 0 20 20" className="h-5 w-5"><defs><linearGradient id="print" x1="0" y1="1" x2="1" y2="0"><stop offset="0" stopColor="#3b2be0" /><stop offset="0.6" stopColor="#c2185f" /><stop offset="1" stopColor="#e8202c" /></linearGradient></defs><rect width="20" height="20" rx="1" fill="url(#print)" /><path d="M4.500 14c-2-5 1-9.500 5.500-9.500s7 4.500 5 9l-1.500 1M7 13c-1.500-3 .5-6 3-6s4.500 3 3 6M9 15c2-1 2.500-3 1.500-5.500" fill="none" stroke="#fff" strokeWidth="1.1" /></svg> },
  { label: 'Xbox', icon: <svg viewBox="0 0 20 20" className="h-5 w-5"><rect width="20" height="20" rx="2" fill="#138a13" /><circle cx="10" cy="10" r="8" fill="#fff" /><path d="M5 3.500C8 4 10 6.500 10 6.500S12 4 15 3.500C13 2 7 2 5 3.500zM10 8.500c3 2.500 5 5.500 5.500 7.500-3 2.500-8 2.500-11 0 .5-2 2.500-5 5.500-7.500zM3.500 14.500C2 12 2 8 4 5.500c1.500.5 3 1.500 4 2.500-2 2-4 4.500-4.500 6.500zM16.500 14.500c1.500-2.500 1.500-6.500-.5-9-1.500.5-3 1.500-4 2.500 2 2 4 4.500 4.500 6.500z" fill="#138a13" /></svg> },
  { label: 'Outlook', icon: <svg viewBox="0 0 20 20" className="h-5 w-5"><path d="M2 8l8-7 9 6v10a2 2 0 0 1-2 2H5a3 3 0 0 1-3-3z" fill="#1a7ad8" /><path d="M3 8l8-6.500 4 2.500L5 12z" fill="#7fd0ff" /><path d="M19 8L5 18h12a2 2 0 0 0 2-2z" fill="#38b6f5" /><rect x="0" y="9" width="8" height="8" rx="1.5" fill="#1354b8" /><circle cx="4" cy="13" r="2" fill="none" stroke="#fff" strokeWidth="1.2" /></svg> },
  { label: 'Edge', icon: <svg viewBox="0 0 20 20" className="h-5 w-5"><circle cx="10" cy="10" r="10" fill="#1a86d8" /><path d="M0 9C1 3 5 0 10 0c6 0 10 4 10 8 0 3-2.500 5-5.500 5-2 0-3-1-2-2.500 1-2-1-4-4-4C4.500 6.500 1 8 0 9z" fill="#3fd0a8" /><path d="M11 0c5.500 0 9 4 9 8 0 3-2.500 5-5.500 5-2 0-3-1-2-2.500C15 6 14 2 11 0z" fill="#6be070" /><path d="M6 12c0-2.500 2-4 4-4 1.500 0 2.500 1 2.500 2-1.500 2 0 4.500 3 4.500 1.500 0 2.500-.5 3.500-1-2 4-6 5.500-8.500 5C8 18 6 15 6 12z" fill="#0d4f9a" /></svg> },
  { label: 'OBS', icon: <svg viewBox="0 0 20 20" className="h-5 w-5"><circle cx="10" cy="10" r="9.3" fill="#201c28" stroke="#e0dce6" strokeWidth="1.2" /><path d="M10 10c-3-1-4-4-2-6M10 10c3-1.500 6 0 6 3M10 10c0 3-2.500 5-5 4" fill="none" stroke="#cfcad6" strokeWidth="2" /></svg> },
];

const Taskbar = () => (
  <footer className="grid h-[39px] grid-cols-[1fr_auto_1fr] items-center bg-[linear-gradient(to_right,#212626,#1a2726_27%,#1d2138_45%,#2a1050_60%,#300b5c_70%,#2b0e50_85%,#271a38)] font-['Open_Sans',sans-serif] text-[11px] text-white">
    <button className="ml-[17px] flex items-center gap-2 justify-self-start text-left text-[10px] leading-[13px]">
      <svg viewBox="0 0 22 24" className="h-6 w-[22px]">
        <circle cx="9" cy="14" r="8.5" fill="#f59a22" />
        <circle cx="14.5" cy="7" r="6.5" fill="#f58aa0" />
        <path d="M12.500 5.500c.5-2 4-2 4 0 0 1.500-3 2.500-4 4.500h4.500" stroke="#5a1525" fill="none" />
      </svg>
      <span className="-ml-1">28°C<br /><span className="text-[#c8cccc]">Soleado</span></span>
    </button>

    <div className="flex items-center pl-1.5">
      <button aria-label="Inicio" className="ml-0.5"><svg viewBox="0 0 20 20" className="h-5 w-5" fill="#4cc8f8"><path d="M0 0h9.500v9.500H0zM10.500 0H20v9.500h-9.500zM0 10.500h9.500V20H0zM10.500 10.500H20V20h-9.500z" /></svg></button>
      <label className="ml-2.5 flex h-[27px] w-[183px] items-center gap-2 rounded-full border border-white/10 bg-white/15 pl-2.5">
        <Glyph className="h-3.5 w-3.5"><circle cx="10" cy="10" r="8" strokeWidth="2" /><path d="M16 16l6.500 6.500" strokeWidth="2" /></Glyph>
        <input aria-label="Buscar" placeholder="Buscar" className="w-28 bg-transparent text-[11px] placeholder-[#c9cdd6] outline-none" />
      </label>
      <div className="ml-1 flex w-[329px]">
        {pinnedApps.map((app) => (
          <button
            key={app.label}
            aria-label={app.label}
            className={`relative flex h-[34px] flex-1 items-center justify-center rounded ${app.label === 'Edge' ? 'bg-white/5' : ''}`}
          >
            {app.icon}
            {app.label === 'Edge' && <span className="absolute bottom-0 h-0.5 w-3.5 rounded-full bg-[#d79bea]" />}
            {app.label === 'OBS' && (
              <>
                <span className="absolute top-1 right-1.5 h-2 w-2 rounded-full bg-[#e80000]" />
                <span className="absolute bottom-0 h-0.5 w-1 rounded-full bg-[#b79bc8]" />
              </>
            )}
          </button>
        ))}
      </div>
    </div>

    <div className="mr-4 flex items-center justify-self-end">
      <svg viewBox="0 0 10 6" className="h-1.5 w-2.5" fill="none" stroke="currentColor" strokeWidth="1.2"><path d="M1 5l4-4 4 4" /></svg>
      <svg viewBox="0 0 16 14" className="ml-3.5 h-3.5 w-4"><path d="M3.500 10a3 3 0 0 1 0-6 4.500 4.500 0 0 1 8.500 1 2.500 2.500 0 0 1 0 5z" fill="#e8e4ee" /><circle cx="10.5" cy="9" r="4.5" fill="#1478c8" /><path d="M10.500 8.500v3M10.500 6.300v1" stroke="#fff" /></svg>
      <Glyph className="ml-2.5 h-4 w-4"><path d="M12 2a3 3 0 0 0-3 3v7a3 3 0 0 0 6 0V5a3 3 0 0 0-3-3zM6 11v1a6 6 0 0 0 12 0v-1M12 18v4" strokeWidth="1.5" /></Glyph>
      <Glyph className="ml-[11px] h-4 w-4"><path d="M2 9.500c6-6 14-6 20 0M5 13c4-4 10-4 14 0M8 16.300c2.500-2.300 5.500-2.300 8 0" strokeWidth="1.8" /><circle cx="12" cy="19" r="1.5" fill="currentColor" /></Glyph>
      <Glyph className="ml-1 h-4 w-4"><path d="M2 9v6h4l5 4.500v-15L6 9zM14.500 9c1.500 2 1.500 4 0 6M17.500 6.500c3 3.500 3 7.500 0 11M20.500 4c4 5 4 11 0 16" strokeWidth="1.5" /></Glyph>
      <svg viewBox="0 0 17 12" className="ml-1.5 h-3 w-[17px]"><rect x="0.5" y="2.5" width="14" height="8" rx="2.5" fill="#a8e0a0" stroke="#e4f0e4" /><path d="M16.500 5v3" stroke="#e4f0e4" /><path d="M7.500 0v6M5.500 4l2 2 2-2" fill="none" stroke="#153015" /></svg>
      <div className="ml-2.5 w-[54px] text-right text-[10px] leading-[13px]">16:12<br />22/03/2026</div>
    </div>
  </footer>
);

export default function App() {
  return (
    <div className="flex min-h-screen flex-col bg-[#333]">
      <BrowserChrome />
      <main className="flex flex-1 flex-col border-t border-[#424242] bg-[#303030] px-1 pt-px pb-1 font-['Lato',sans-serif]">
        <TopToolbar />
        <div className="mt-1 flex flex-1">
          <LeftToolbar />
          <div className="mr-[3px] ml-1 flex min-w-0 flex-1 flex-col">
            <Chart />
            <ReplayBar />
            <RangeBar />
            <TradingBar />
          </div>
          <RightToolbar />
        </div>
      </main>
      <Taskbar />
    </div>
  );
}
